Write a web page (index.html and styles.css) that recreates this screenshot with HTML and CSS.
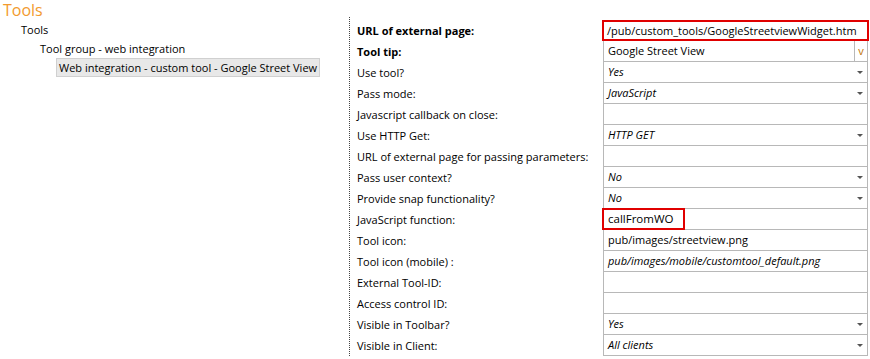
FILE: index.html
```html
<!DOCTYPE html>
<html lang="en">
<head>
  <meta charset="UTF-8">
  <title>Tools</title>
  <link rel="stylesheet" href="styles.css">
</head>
<body>
  <h1 class="page-title">Tools</h1>
  <div class="layout">
    <div class="tree">
      <div class="node level-1">Tools</div>
      <div class="node level-2">Tool group - web integration</div>
      <div class="node level-3 selected">Web integration - custom tool - Google Street View</div>
    </div>

    <div class="props">
      <div class="row">
        <div class="label bold">URL of external page:</div>
        <div class="value highlight">/pub/custom_tools/GoogleStreetviewWidget.htm</div>
      </div>
      <div class="row">
        <div class="label bold">Tool tip:</div>
        <div class="value with-btn"><span class="text">Google Street View</span><span class="btn">v</span></div>
      </div>
      <div class="row">
        <div class="label">Use tool?</div>
        <div class="value select"><i>Yes</i><span class="arrow"></span></div>
      </div>
      <div class="row">
        <div class="label">Pass mode:</div>
        <div class="value select"><i>JavaScript</i><span class="arrow"></span></div>
      </div>
      <div class="row">
        <div class="label">Javascript callback on close:</div>
        <div class="value"></div>
      </div>
      <div class="row">
        <div class="label">Use HTTP Get:</div>
        <div class="value select"><i>HTTP GET</i><span class="arrow"></span></div>
      </div>
      <div class="row">
        <div class="label">URL of external page for passing parameters:</div>
        <div class="value"></div>
      </div>
      <div class="row">
        <div class="label">Pass user context?</div>
        <div class="value select"><i>No</i><span class="arrow"></span></div>
      </div>
      <div class="row">
        <div class="label">Provide snap functionality?</div>
        <div class="value select"><i>No</i><span class="arrow"></span></div>
      </div>
      <div class="row">
        <div class="label">JavaScript function:</div>
        <div class="value"><span class="mark">callFromWO</span></div>
      </div>
      <div class="row">
        <div class="label">Tool icon:</div>
        <div class="value">pub/images/streetview.png</div>
      </div>
      <div class="row">
        <div class="label">Tool icon (mobile) :</div>
        <div class="value"><i>pub/images/mobile/customtool_default.png</i></div>
      </div>
      <div class="row">
        <div class="label">External Tool-ID:</div>
        <div class="value"></div>
      </div>
      <div class="row">
        <div class="label">Access control ID:</div>
        <div class="value"></div>
      </div>
      <div class="row">
        <div class="label">Visible in Toolbar?</div>
        <div class="value select"><i>Yes</i><span class="arrow"></span></div>
      </div>
      <div class="row">
        <div class="label">Visible in Client:</div>
        <div class="value select"><i>All clients</i><span class="arrow"></span></div>
      </div>
    </div>
  </div>
</body>
</html>
```

FILE: styles.css
```css
body {
  font-family: "Open Sans", "Noto Sans", sans-serif;
  font-size: 11px;
  color: #000;
  background-color: #fff;
  margin: 0;
}

.page-title {
  font-size: 16px;
  font-weight: normal;
  color: #f29a2e;
  margin: 0;
  padding: 0 0 0 3px;
  line-height: 20px;
}

.layout {
  display: flex;
}

.tree {
  width: 349px;
}

.node {
  line-height: 19px;
  white-space: nowrap;
}

.level-1 {
  padding-left: 21px;
}

.level-2 {
  padding-left: 40px;
}

.level-3 {
  margin-left: 56px;
  width: 260px;
  padding-left: 2px;
  background-color: #e8e8e8;
  border: 1px solid #d0d0d0;
  line-height: 17px;
}

.props {
  border-left: 1px dotted #444;
  margin-top: -3px;
  padding-top: 3px;
  padding-left: 7px;
  flex: 1;
}

.row {
  display: flex;
  height: 21px;
}

.label {
  width: 246px;
  line-height: 21px;
  white-space: nowrap;
}

.bold {
  font-weight: bold;
}

.value {
  width: 259px;
  border: 1px solid #b8b8b8;
  border-top: none;
  line-height: 20px;
  padding-left: 4px;
  display: flex;
  align-items: center;
  white-space: nowrap;
  position: relative;
}

.row:first-child .value {
  border-top: 1px solid #b8b8b8;
}

.value i {
  font-style: italic;
}

.highlight {
  border: 2px solid #e00000 !important;
  margin-left: -1px;
  width: 260px;
  padding-left: 3px;
}

.with-btn .text {
  flex: 1;
}

.btn {
  width: 12px;
  border-left: 1px solid #b8b8b8;
  height: 20px;
  text-align: center;
  color: #c07000;
}

.select .arrow {
  position: absolute;
  right: 4px;
  top: 9px;
  width: 0;
  height: 0;
  border-left: 3px solid transparent;
  border-right: 3px solid transparent;
  border-top: 3px solid #555;
}

.mark {
  border: 2px solid #e00000;
  margin-left: -6px;
  padding: 0 10px 0 4px;
  line-height: 18px;
  font-size: 11.5px;
}
```
